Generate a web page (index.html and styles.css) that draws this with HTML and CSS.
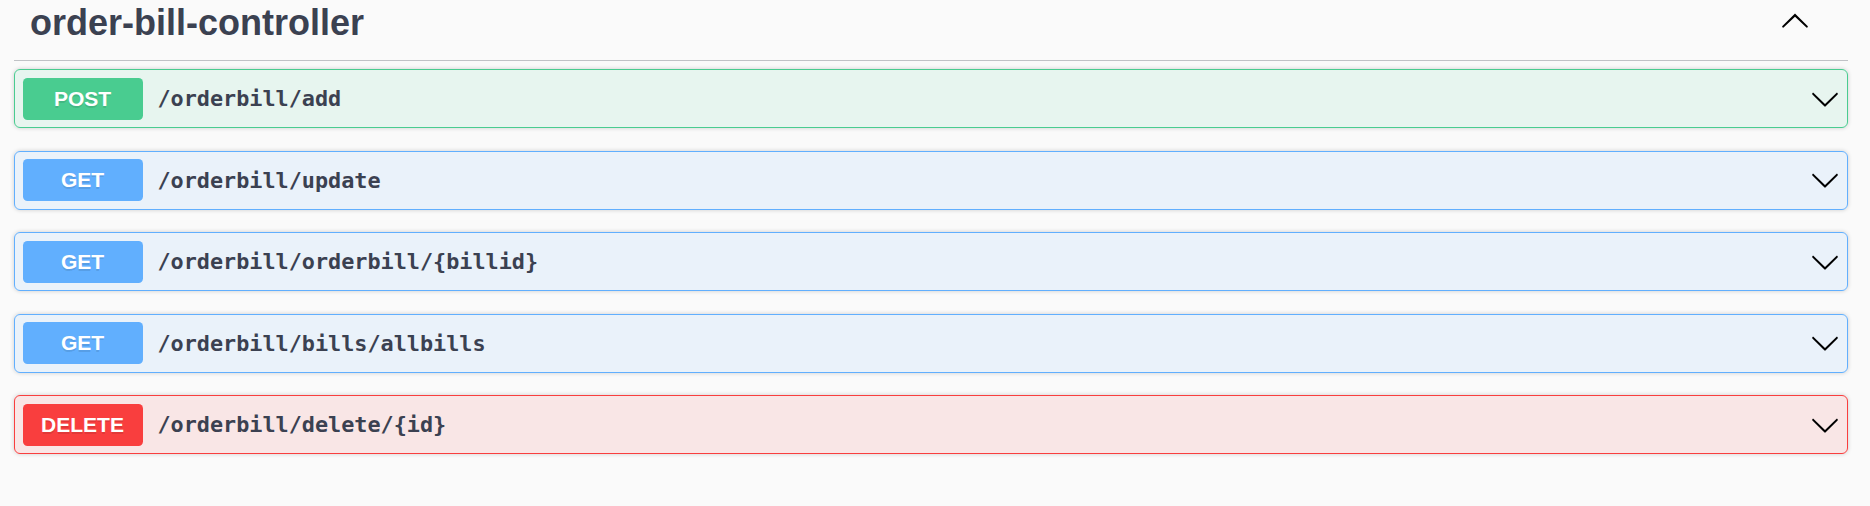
FILE: index.html
```html
<!DOCTYPE html>
<html lang="en">
<head>
<meta charset="utf-8">
<title>order-bill-controller</title>
<link rel="stylesheet" href="styles.css">
</head>
<body>
<div class="wrapper">
  <div class="tag-section">
    <h3 class="opblock-tag">
      <span class="tag-name">order-bill-controller</span>
      <button class="expand" aria-label="collapse">
        <svg class="arrow" viewBox="0 0 20 20" width="30" height="30"><path d="M17.418 14.908c.272.268.709.268.979 0s.271-.701 0-.969l-7.908-7.83c-.27-.268-.707-.268-.979 0l-7.908 7.830c-.27.268-.27.701 0 .969.271.268.709.268.979 0L10 7.767l7.418 7.141z"/></svg>
      </button>
    </h3>
    <div class="operations">
      <div class="opblock opblock-post">
        <div class="summary">
          <span class="method">POST</span>
          <span class="path">/orderbill/add</span>
          <svg class="arrow" viewBox="0 0 20 20" width="30" height="30"><path d="M17.418 6.109c.272-.268.709-.268.979 0s.271.701 0 .969l-7.908 7.83c-.27.268-.707.268-.979 0l-7.908-7.83c-.27-.268-.27-.701 0-.969.271-.268.709-.268.979 0L10 13.25l7.418-7.141z"/></svg>
        </div>
      </div>
      <div class="opblock opblock-get">
        <div class="summary">
          <span class="method">GET</span>
          <span class="path">/orderbill/update</span>
          <svg class="arrow" viewBox="0 0 20 20" width="30" height="30"><path d="M17.418 6.109c.272-.268.709-.268.979 0s.271.701 0 .969l-7.908 7.83c-.27.268-.707.268-.979 0l-7.908-7.83c-.27-.268-.27-.701 0-.969.271-.268.709-.268.979 0L10 13.25l7.418-7.141z"/></svg>
        </div>
      </div>
      <div class="opblock opblock-get">
        <div class="summary">
          <span class="method">GET</span>
          <span class="path">/orderbill/orderbill/{billid}</span>
          <svg class="arrow" viewBox="0 0 20 20" width="30" height="30"><path d="M17.418 6.109c.272-.268.709-.268.979 0s.271.701 0 .969l-7.908 7.83c-.27.268-.707.268-.979 0l-7.908-7.83c-.27-.268-.27-.701 0-.969.271-.268.709-.268.979 0L10 13.25l7.418-7.141z"/></svg>
        </div>
      </div>
      <div class="opblock opblock-get">
        <div class="summary">
          <span class="method">GET</span>
          <span class="path">/orderbill/bills/allbills</span>
          <svg class="arrow" viewBox="0 0 20 20" width="30" height="30"><path d="M17.418 6.109c.272-.268.709-.268.979 0s.271.701 0 .969l-7.908 7.83c-.27.268-.707.268-.979 0l-7.908-7.83c-.27-.268-.27-.701 0-.969.271-.268.709-.268.979 0L10 13.25l7.418-7.141z"/></svg>
        </div>
      </div>
      <div class="opblock opblock-delete">
        <div class="summary">
          <span class="method">DELETE</span>
          <span class="path">/orderbill/delete/{id}</span>
          <svg class="arrow" viewBox="0 0 20 20" width="30" height="30"><path d="M17.418 6.109c.272-.268.709-.268.979 0s.271.701 0 .969l-7.908 7.83c-.27.268-.707.268-.979 0l-7.908-7.83c-.27-.268-.27-.701 0-.969.271-.268.709-.268.979 0L10 13.25l7.418-7.141z"/></svg>
        </div>
      </div>
    </div>
  </div>
</div>
</body>
</html>
```

FILE: styles.css
```css
html, body {
  margin: 0;
  padding: 0;
  background: #fafafa;
}

.wrapper {
  padding: 0 22px 0 14px;
}

.opblock-tag {
  display: flex;
  justify-content: space-between;
  align-items: flex-start;
  margin: 0 0 8px;
  padding: 3px 38px 17px 16px;
  border-bottom: 1px solid rgba(59, 65, 81, 0.3);
  font-family: "Liberation Sans", Arial, sans-serif;
  font-size: 36px;
  font-weight: 700;
  line-height: 40px;
  color: #3b4151;
}

.expand {
  margin: 2px 0 0;
  padding: 0;
  border: none;
  background: none;
  display: flex;
}

.arrow {
  display: block;
  fill: #000;
  flex: none;
}

.opblock {
  margin: 0 0 22.5px;
  border: 1px solid #000;
  border-radius: 6px;
  box-shadow: 0 0 4.5px rgba(0, 0, 0, 0.19);
}

.summary {
  display: flex;
  align-items: center;
  padding: 7.5px;
}

.method {
  flex: none;
  min-width: 120px;
  height: 42px;
  display: flex;
  align-items: center;
  justify-content: center;
  border-radius: 4.5px;
  font-family: "Liberation Sans", Arial, sans-serif;
  font-size: 21px;
  font-weight: 700;
  color: #fff;
  text-shadow: 0 1.5px 0 rgba(0, 0, 0, 0.1);
}

.path {
  flex: 1;
  padding: 0 15px;
  font-family: "DejaVu Sans Mono", monospace;
  font-size: 21.8px;
  font-weight: 700;
  color: #3b4151;
}

.opblock-post {
  border-color: #49cc90;
  background: rgba(73, 204, 144, 0.1);
}
.opblock-post .method {
  background: #49cc90;
}

.opblock-get {
  border-color: #61affe;
  background: rgba(97, 175, 254, 0.1);
}
.opblock-get .method {
  background: #61affe;
}

.opblock-delete {
  border-color: #f93e3e;
  background: rgba(249, 62, 62, 0.1);
}
.opblock-delete .method {
  background: #f93e3e;
}
```
